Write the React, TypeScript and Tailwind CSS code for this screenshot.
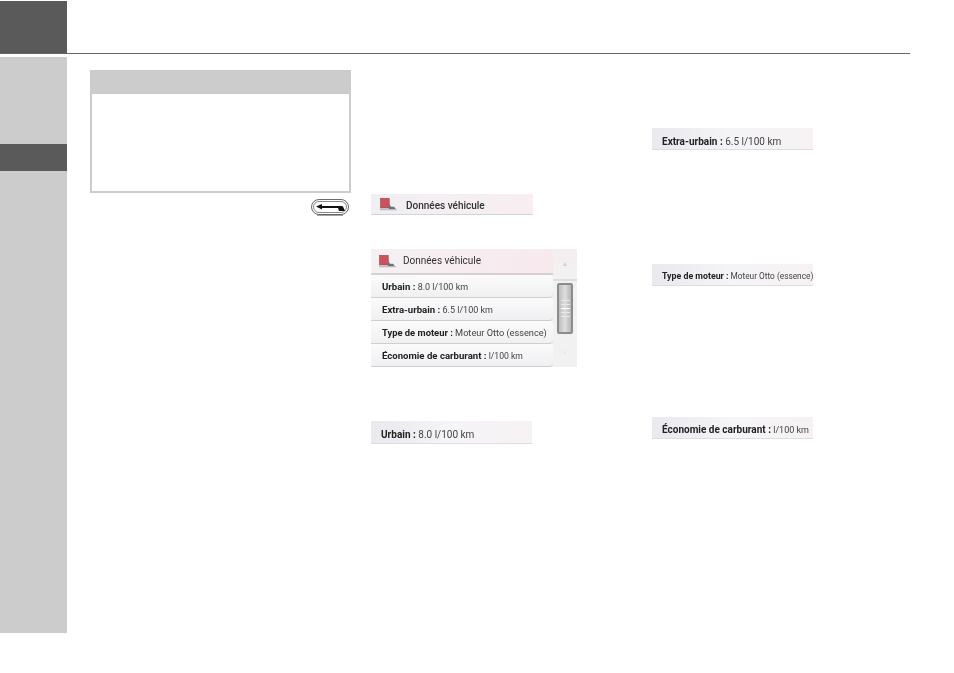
const font = "font-['Liberation_Sans',Arial,sans-serif]"

function TruckIcon({ className }: { className?: string }) {
  return (
    <svg viewBox="0 0 20 14" className={className}>
      <rect x="1.3" y="0.3" width="9.5" height="10.5" fill="#c9525f" stroke="#a8434f" strokeWidth="0.6" />
      <path d="M1 12h17l-2-2.5h-3.5l-1-2.5h-1v5H1z" fill="#6f7378" />
      <rect x="1" y="12" width="18" height="1.2" fill="#b4b7bb" />
    </svg>
  )
}

function Value({
  label,
  value,
  labelSize = 'text-[9.6px]',
  valueSize = 'text-[9px]',
}: {
  label: string
  value: string
  labelSize?: string
  valueSize?: string
}) {
  return (
    <span className="whitespace-nowrap font-['Roboto',sans-serif]">
      <span className={`font-bold text-[#222] ${labelSize}`}>{label} :</span>
      <span className={`text-[#444] ${valueSize}`}> {value}</span>
    </span>
  )
}

function Strip({
  label,
  value,
  className,
  labelSize = 'text-[10px]',
  valueSize = 'text-[10px]',
}: {
  label: string
  value: string
  className?: string
  labelSize?: string
  valueSize?: string
}) {
  return (
    <div
      className={`flex w-[161px] h-[22px] items-center overflow-hidden pl-[10px] bg-gradient-to-r from-[#e9e9ee] via-[#f5f4f6] to-[#f6f2f4] border-b border-[#dcdce2] blur-[0.3px] ${className ?? ''}`}
    >
      <Value label={label} value={value} labelSize={labelSize} valueSize={valueSize} />
    </div>
  )
}

function ScreenRow({
  label,
  value,
  labelSize,
  valueSize,
}: {
  label: string
  value: string
  labelSize?: string
  valueSize?: string
}) {
  return (
    <div className="flex h-[23px] items-center overflow-hidden pb-[3px] pl-[11px] bg-gradient-to-b from-[#fbfbfb] to-[#f0f0f2] border-b border-[#cfcfd3] rounded-r-[4px]">
      <Value label={label} value={value} labelSize={labelSize} valueSize={valueSize} />
    </div>
  )
}

function ScrollBar() {
  return (
    <div className="flex w-[24px] flex-col bg-[#f1f1f1]">
      <div className="flex h-[32px] items-center justify-center bg-gradient-to-b from-[#f3edef] to-[#f2f2f2] border-b-2 border-[#dedede] text-[7px] text-[#d4d4d4]">
        ▲
      </div>
      <div className="flex flex-1 flex-col items-center pt-[2px]">
        <div className="flex h-[51px] w-[16px] flex-col items-center justify-center gap-[3px] rounded-[2px] border-2 border-[#8c8c8c] bg-gradient-to-r from-[#bdbdbd] via-[#dedede] to-[#b5b5b5]">
          <div className="h-px w-[9px] bg-[#e8e8e8]" />
          <div className="h-px w-[9px] bg-[#e8e8e8]" />
          <div className="h-px w-[9px] bg-white" />
          <div className="h-px w-[9px] bg-[#e8e8e8]" />
          <div className="h-px w-[9px] bg-[#e8e8e8]" />
        </div>
      </div>
      <div className="flex h-[28px] items-center justify-center text-[8px] text-[#ddd]">‹</div>
    </div>
  )
}

export default function App() {
  return (
    <div className={`h-[673px] w-[954px] overflow-hidden bg-white pt-px ${font}`}>
      <header className="flex h-[53px] w-[910px] border-b border-[#666]">
        <div className="h-[52px] w-[67px] bg-[#5a5a5a]" />
      </header>

      <div className="flex">
        <aside className="mt-[3px] flex h-[576px] w-[67px] flex-col bg-[#cccccc] pt-[87px]">
          <div className="h-[27px] bg-[#5a5a5a]" />
        </aside>

        <section className="ml-[23px] mt-[16px] w-[261px]">
          <div className="h-[123px] border-2 border-t-0 border-[#cccccc]">
            <div className="-mx-[2px] h-[24px] bg-[#cccccc]" />
          </div>
          <div className="mt-[6px] flex justify-end pr-[2px]">
            <svg viewBox="0 0 38 17" className="h-[17px] w-[38px]">
              <path d="M6 16.2h26" stroke="#999" strokeWidth="1.4" />
              <rect x="0.5" y="0.5" width="37" height="15" rx="7.5" fill="#fff" stroke="#444" strokeWidth="0.8" />
              <rect x="2.5" y="2.5" width="33" height="11" rx="5.5" fill="#fff" stroke="#555" strokeWidth="0.7" />
              <path d="M5 7.5l6-2.5v2h20l1 0.5 2 4.5h-6l-1-3H11v1.5z" fill="#111" />
            </svg>
          </div>
        </section>

        <section className="ml-[20px] w-[206px] pt-[140px]">
          <div className="flex h-[21px] w-[162px] items-center bg-gradient-to-r from-[#f0eff2] to-[#f8eef1] border-b border-[#cfd3da] pl-[8px] blur-[0.3px]">
            <TruckIcon className="h-[13px] w-[19px]" />
            <span className="ml-[8px] pt-[2px] font-['Roboto',sans-serif] text-[10px] font-medium text-[#333] whitespace-nowrap">Données véhicule</span>
          </div>

          <div className="mt-[34px] flex h-[118px] w-[206px] overflow-hidden bg-[#f1f1f1] blur-[0.3px]">
            <div className="w-[182px] flex-none">
              <div className="flex h-[26px] items-center bg-gradient-to-r from-[#f4f1f3] to-[#f8e9ed] border-b-2 border-[#d5d0d2] pl-[7px]">
                <TruckIcon className="h-[13px] w-[19px]" />
                <span className="ml-[6px] pb-[2px] font-['Roboto',sans-serif] text-[10px] text-[#333] whitespace-nowrap">Données véhicule</span>
              </div>
              <ScreenRow label="Urbain" value="8.0 l/100 km" />
              <ScreenRow label="Extra-urbain" value="6.5 l/100 km" />
              <ScreenRow label="Type de moteur" value="Moteur Otto (essence)" labelSize="text-[9.4px]" valueSize="text-[9.2px]" />
              <ScreenRow label="Économie de carburant" value="l/100 km" valueSize="text-[8.6px]" />
            </div>
            <ScrollBar />
          </div>

          <Strip label="Urbain" value="8.0 l/100 km" className="mt-[54px] h-[23px] pt-[1px]" />
        </section>

        <section className="ml-[75px] w-[162px] pt-[74px]">
          <Strip label="Extra-urbain" value="6.5 l/100 km" className="pt-[2px]" />
          <Strip
            label="Type de moteur"
            value="Moteur Otto (essence)"
            className="mt-[114px] pb-[1px]"
            labelSize="text-[8.8px]"
            valueSize="text-[8.3px]"
          />
          <Strip
            label="Économie de carburant"
            value="l/100 km"
            className="mt-[131px]"
            valueSize="text-[9px]"
          />
        </section>
      </div>
    </div>
  )
}
